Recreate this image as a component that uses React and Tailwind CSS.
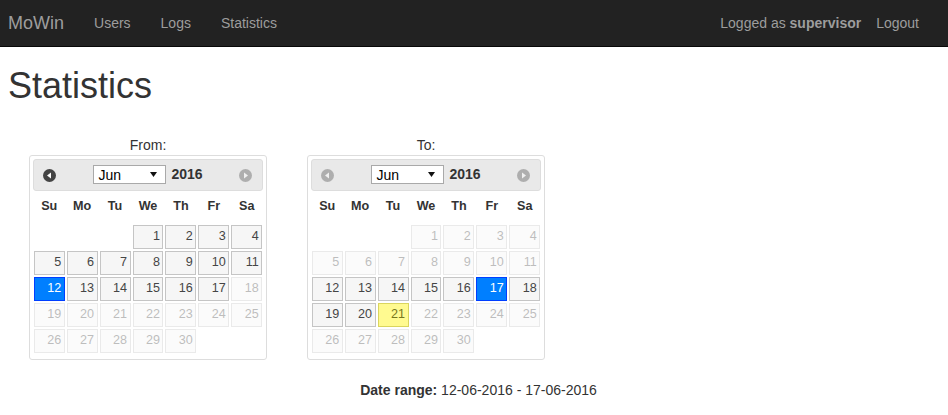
import React from "react";

const DAYS = ["Su", "Mo", "Tu", "We", "Th", "Fr", "Sa"];

// June 2016 starts on a Wednesday
const cells = [null, null, null, ...Array.from({ length: 30 }, (_, i) => i + 1), null, null];

function NavCircle({ dir, disabled }) {
  return (
    <svg
      width="13"
      height="13"
      viewBox="0 0 13 13"
      className={`absolute top-[9px] ${dir === "prev" ? "left-[9px]" : "right-[10px]"} ${disabled ? "opacity-35" : ""}`}
    >
      <circle cx="6.5" cy="6.5" r="6.5" fill="#444444" />
      {dir === "prev" ? (
        <polygon points="4,6.5 8,3.5 8,9.5" fill="#ffffff" />
      ) : (
        <polygon points="9,6.5 5,3.5 5,9.5" fill="#ffffff" />
      )}
    </svg>
  );
}

function Day({ n, min, max, selected, today }) {
  if (n === null) return <div className="p-[1px]" />;
  const disabled = n < min || n > max;
  let look = "border-[#c5c5c5] bg-[#f6f6f6] text-[#454545]";
  if (!disabled && n === selected) look = "border-[#003eff] bg-[#007fff] text-white";
  else if (!disabled && n === today) look = "border-[#dad55e] bg-[#fffa90] text-[#777620]";
  return (
    <div className={`p-[1px] ${disabled ? "opacity-35" : ""}`}>
      <div className={`h-[24px] border flex items-center justify-end pr-[2.5px] pb-[1px] ${look}`}>{n}</div>
    </div>
  );
}

function Calendar({ label, min, max, selected, prevDisabled, nextDisabled }) {
  return (
    <div className="w-[238px]">
      <div className="h-[20px] leading-[20px] text-center text-[14px] text-[#333]">{label}</div>
      <div className="border border-[#dddddd] rounded-[3px] bg-white px-[2.8px] pt-[2.8px]">
        <div className="relative h-[32px] rounded-[3px] border border-[#dddddd] bg-[#e9e9e9] flex items-center justify-center">
          <NavCircle dir="prev" disabled={prevDisabled} />
          <div className="w-[73px] h-[19px] border border-[#a9a9a9] bg-white text-[14px] text-black leading-none flex items-center justify-between pl-[4px] pr-[8px]">
            <span>Jun</span>
            <svg width="7" height="5" viewBox="0 0 7 5">
              <polygon points="0,0 7,0 3.5,5" fill="#111" />
            </svg>
          </div>
          <span className="ml-[5px] text-[14px] font-bold text-[#333]">2016</span>
          <NavCircle dir="next" disabled={nextDisabled} />
        </div>
        <div className="grid grid-cols-7 text-[12.6px] mb-[5px]">
          {DAYS.map((d) => (
            <div key={d} className="h-[33px] pb-[2px] flex items-center justify-center font-bold text-[#333]">
              {d}
            </div>
          ))}
          {cells.map((n, i) => (
            <Day key={i} n={n} min={min} max={max} selected={selected} today={21} />
          ))}
        </div>
      </div>
    </div>
  );
}

export default function App() {
  return (
    <div className="min-h-[415px] bg-white text-[#333] text-[14px]" style={{ fontFamily: '"Liberation Sans", Arial, sans-serif' }}>
      {/* Navbar */}
      <nav className="h-[47px] bg-[#222222] border-b border-[#080808] flex items-center justify-between text-[#9d9d9d]">
        <div className="flex items-center pl-[8px]">
          <span className="text-[18px] pr-[15px]">MoWin</span>
          <span className="px-[15px] leading-[20px]">Users</span>
          <span className="px-[15px] leading-[20px]">Logs</span>
          <span className="px-[15px] leading-[20px]">Statistics</span>
        </div>
        <div className="flex items-center pr-[29px] leading-[20px]">
          <span>
            Logged as <b>supervisor</b>
          </span>
          <span className="ml-[15px]">Logout</span>
        </div>
      </nav>

      <h1 className="mt-[19px] pl-[8px] text-[36px] leading-[40px] text-[#333]">Statistics</h1>

      <div className="flex gap-[40px] ml-[29px] mt-[29px]">
        <Calendar label="From:" min={1} max={17} selected={12} prevDisabled={false} nextDisabled={true} />
        <Calendar label="To:" min={12} max={21} selected={17} prevDisabled={true} nextDisabled={true} />
      </div>

      <div className="mt-[20px] pl-[9px] text-center leading-[20px]">
        <b>Date range:</b> 12-06-2016 - 17-06-2016
      </div>
    </div>
  );
}
